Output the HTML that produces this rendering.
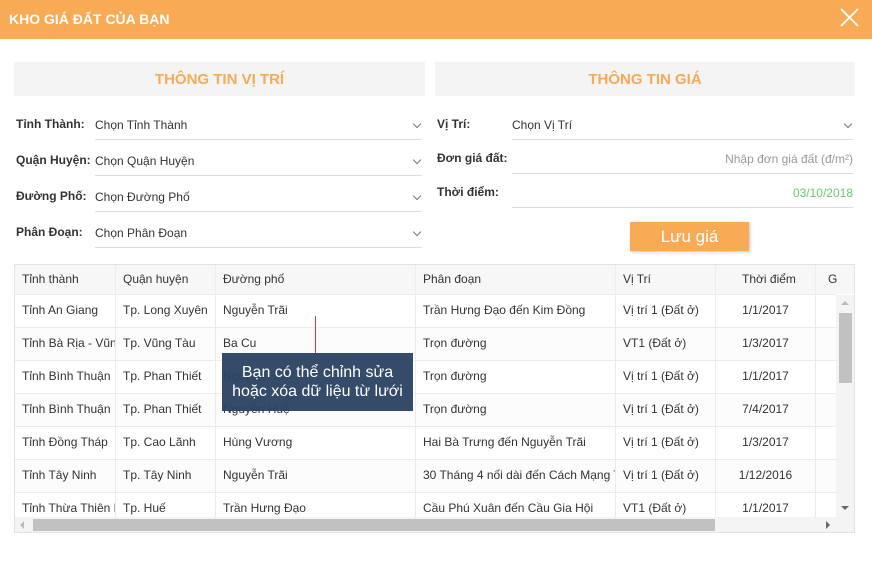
<!DOCTYPE html>
<html><head><meta charset="utf-8"><style>
*{box-sizing:border-box;margin:0;padding:0}
body{width:872px;height:567px;background:#fff;font-family:"Liberation Sans",sans-serif;position:relative;overflow:hidden;color:#333}
.hdr{position:absolute;left:0;top:0;width:872px;height:39px;background:#f9aa55}
.hdr .t{position:absolute;left:9px;top:11px;color:#fff;font-weight:bold;font-size:14px}
.sec{position:absolute;top:62px;height:34px;background:#f4f4f4;color:#f9aa55;font-weight:bold;font-size:15px;text-align:center;line-height:36px}
.lab{position:absolute;font-size:12px;font-weight:bold;color:#333}
.val{position:absolute;font-size:12px;color:#333}
.ul{position:absolute;height:1px;background:#ddd}
.chev{position:absolute;width:6px;height:6px;border-right:1.5px solid #777;border-bottom:1.5px solid #777;transform:rotate(45deg)}
.btn{position:absolute;left:630px;top:222px;width:119px;height:29px;background:#f9aa55;color:#fff;font-size:17px;text-align:center;line-height:29px;box-shadow:1px 1px 3px rgba(0,0,0,.25)}
.tbl{position:absolute;left:14px;top:264px;width:841px;height:269px;border:1px solid #e3e3e3;overflow:hidden}
.row{position:absolute;left:0;height:33px;width:821px;border-bottom:1px solid #ececec}
.c{position:absolute;top:0;height:100%;font-size:12px;line-height:31px;padding-left:7px;white-space:nowrap;overflow:hidden;border-right:1px solid #ececec;color:#333}
.h .c{background:#f7f7f7;color:#333;line-height:28px}
</style></head><body>
<div class="hdr"><div class="t">KHO GIÁ ĐẤT CỦA BẠN</div>
<svg style="position:absolute;left:840px;top:8px" width="19" height="19"><path d="M1 1L18 18M18 1L1 18" stroke="#fff" stroke-width="1.8"/></svg></div>
<div class="sec" style="left:14px;width:411px">THÔNG TIN VỊ TRÍ</div>
<div class="sec" style="left:435px;width:420px">THÔNG TIN GIÁ</div>

<div class="lab" style="left:16px;top:117px">Tỉnh Thành:</div><div class="val" style="left:95px;top:118px">Chọn Tỉnh Thành</div><div class="ul" style="left:95px;top:139px;width:327px"></div><div class="chev" style="left:414px;top:121px"></div>
<div class="lab" style="left:16px;top:153px">Quận Huyện:</div><div class="val" style="left:95px;top:154px">Chọn Quận Huyện</div><div class="ul" style="left:95px;top:175px;width:327px"></div><div class="chev" style="left:414px;top:157px"></div>
<div class="lab" style="left:16px;top:189px">Đường Phố:</div><div class="val" style="left:95px;top:190px">Chọn Đường Phố</div><div class="ul" style="left:95px;top:211px;width:327px"></div><div class="chev" style="left:414px;top:193px"></div>
<div class="lab" style="left:16px;top:225px">Phân Đoạn:</div><div class="val" style="left:95px;top:226px">Chọn Phân Đoạn</div><div class="ul" style="left:95px;top:247px;width:327px"></div><div class="chev" style="left:414px;top:229px"></div>

<div class="lab" style="left:437px;top:117px">Vị Trí:</div><div class="val" style="left:512px;top:118px">Chọn Vị Trí</div><div class="ul" style="left:512px;top:139px;width:341px"></div><div class="chev" style="left:845px;top:121px"></div>
<div class="lab" style="left:437px;top:151px">Đơn giá đất:</div><div class="val" style="right:19px;top:152px;color:#999">Nhập đơn giá đất (đ/m²)</div><div class="ul" style="left:512px;top:173px;width:341px"></div>
<div class="lab" style="left:437px;top:185px">Thời điểm:</div><div class="val" style="right:19px;top:186px;color:#6c6">03/10/2018</div><div class="ul" style="left:512px;top:207px;width:341px"></div>
<div class="btn">Lưu giá</div>

<div class="tbl">
<div class="row h" style="top:0;height:30px"><div class="c" style="left:0;width:101px">Tỉnh thành</div><div class="c" style="left:101px;width:100px">Quận huyện</div><div class="c" style="left:201px;width:200px">Đường phố</div><div class="c" style="left:401px;width:200px">Phân đoạn</div><div class="c" style="left:601px;width:100px">Vị Trí</div><div class="c" style="left:701px;width:100px;text-align:center">Thời điểm</div><div class="c" style="left:801px;width:40px;padding-left:12px;border:0">G</div></div>
<div class="row" style="top:30px"><div class="c" style="left:0;width:101px">Tỉnh An Giang</div><div class="c" style="left:101px;width:100px">Tp. Long Xuyên</div><div class="c" style="left:201px;width:200px">Nguyễn Trãi</div><div class="c" style="left:401px;width:200px">Trần Hưng Đạo đến Kim Đồng</div><div class="c" style="left:601px;width:100px">Vị trí 1 (Đất ở)</div><div class="c" style="left:701px;width:100px;text-align:center;padding:0">1/1/2017</div></div>
<div class="row" style="top:63px;background:#fcfcfc"><div class="c" style="left:0;width:101px">Tỉnh Bà Rịa - Vũng Tàu</div><div class="c" style="left:101px;width:100px">Tp. Vũng Tàu</div><div class="c" style="left:201px;width:200px">Ba Cu</div><div class="c" style="left:401px;width:200px">Trọn đường</div><div class="c" style="left:601px;width:100px">VT1 (Đất ở)</div><div class="c" style="left:701px;width:100px;text-align:center;padding:0">1/3/2017</div></div>
<div class="row" style="top:96px"><div class="c" style="left:0;width:101px">Tỉnh Bình Thuận</div><div class="c" style="left:101px;width:100px">Tp. Phan Thiết</div><div class="c" style="left:201px;width:200px">Nguyễn Huệ</div><div class="c" style="left:401px;width:200px">Trọn đường</div><div class="c" style="left:601px;width:100px">Vị trí 1 (Đất ở)</div><div class="c" style="left:701px;width:100px;text-align:center;padding:0">1/1/2017</div></div>
<div class="row" style="top:129px;background:#fcfcfc"><div class="c" style="left:0;width:101px">Tỉnh Bình Thuận</div><div class="c" style="left:101px;width:100px">Tp. Phan Thiết</div><div class="c" style="left:201px;width:200px">Nguyễn Huệ</div><div class="c" style="left:401px;width:200px">Trọn đường</div><div class="c" style="left:601px;width:100px">Vị trí 1 (Đất ở)</div><div class="c" style="left:701px;width:100px;text-align:center;padding:0">7/4/2017</div></div>
<div class="row" style="top:162px"><div class="c" style="left:0;width:101px">Tỉnh Đồng Tháp</div><div class="c" style="left:101px;width:100px">Tp. Cao Lãnh</div><div class="c" style="left:201px;width:200px">Hùng Vương</div><div class="c" style="left:401px;width:200px">Hai Bà Trưng đến Nguyễn Trãi</div><div class="c" style="left:601px;width:100px">Vị trí 1 (Đất ở)</div><div class="c" style="left:701px;width:100px;text-align:center;padding:0">1/3/2017</div></div>
<div class="row" style="top:195px;background:#fcfcfc"><div class="c" style="left:0;width:101px">Tỉnh Tây Ninh</div><div class="c" style="left:101px;width:100px">Tp. Tây Ninh</div><div class="c" style="left:201px;width:200px">Nguyễn Trãi</div><div class="c" style="left:401px;width:200px">30 Tháng 4 nối dài đến Cách Mạng Tháng 8</div><div class="c" style="left:601px;width:100px">Vị trí 1 (Đất ở)</div><div class="c" style="left:701px;width:100px;text-align:center;padding:0">1/12/2016</div></div>
<div class="row" style="top:228px"><div class="c" style="left:0;width:101px">Tỉnh Thừa Thiên Huế</div><div class="c" style="left:101px;width:100px">Tp. Huế</div><div class="c" style="left:201px;width:200px">Trần Hưng Đạo</div><div class="c" style="left:401px;width:200px">Cầu Phú Xuân đến Cầu Gia Hội</div><div class="c" style="left:601px;width:100px">VT1 (Đất ở)</div><div class="c" style="left:701px;width:100px;text-align:center;padding:0">1/1/2017</div></div>
<div style="position:absolute;left:821px;top:30px;width:19px;height:222px;background:#f4f4f4"></div>
<div style="position:absolute;left:824px;top:48px;width:13px;height:70px;background:#c1c1c1"></div>
<div style="position:absolute;left:826px;top:36px;border:4px solid transparent;border-bottom-color:#bbb;border-top:0"></div>
<div style="position:absolute;left:826px;top:241px;border:4px solid transparent;border-top-color:#666;border-bottom:0"></div>
<div style="position:absolute;left:0;top:252px;width:841px;height:17px;background:#f4f4f4"></div>
<div style="position:absolute;left:18px;top:254px;width:682px;height:12px;background:#c1c1c1"></div>
<div style="position:absolute;left:5px;top:256px;border:4px solid transparent;border-right-color:#bbb;border-left:0"></div>
<div style="position:absolute;left:811px;top:256px;border:4px solid transparent;border-left-color:#666;border-right:0"></div>
</div>
<div style="position:absolute;left:315px;top:316px;width:1px;height:37px;background:#e33"></div>
<div style="position:absolute;left:222px;top:353px;width:191px;height:58px;background:rgba(44,68,99,.96);color:#fff;font-size:16px;text-align:center;line-height:19px;padding-top:10px">Bạn có thể chỉnh sửa<br>hoặc xóa dữ liệu từ lưới</div>
</body></html>
